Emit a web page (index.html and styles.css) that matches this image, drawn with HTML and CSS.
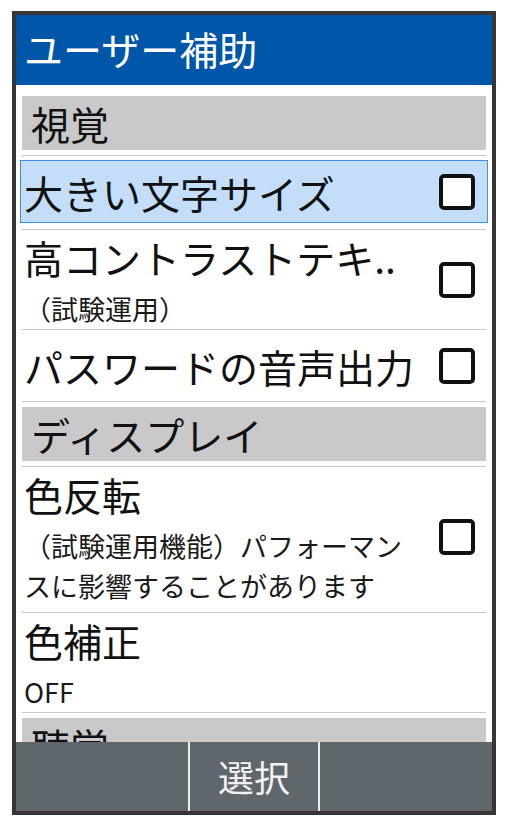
FILE: index.html
```html
<!DOCTYPE html>
<html lang="ja">
<head>
<meta charset="utf-8">
<title>ユーザー補助</title>
<link rel="stylesheet" href="styles.css">
</head>
<body>
<div class="phone">
  <header class="appbar">ユーザー補助</header>
  <main class="content">
    <div class="section"><div class="section-label">視覚</div></div>

    <div class="item item-selected">
      <div class="focus">
        <div class="text"><div class="title">大きい文字サイズ</div></div>
        <span class="checkbox"></span>
      </div>
    </div>

    <div class="item">
      <div class="text">
        <div class="title">高コントラストテキ..</div>
        <div class="sub">（試験運用）</div>
      </div>
      <span class="checkbox"></span>
    </div>

    <div class="item">
      <div class="text"><div class="title">パスワードの音声出力</div></div>
      <span class="checkbox"></span>
    </div>

    <div class="section"><div class="section-label">ディスプレイ</div></div>

    <div class="item item-long">
      <div class="text">
        <div class="title">色反転</div>
        <div class="sub">（試験運用機能）パフォーマンスに影響することがあります</div>
      </div>
      <span class="checkbox"></span>
    </div>

    <div class="item">
      <div class="text">
        <div class="title">色補正</div>
        <div class="sub">OFF</div>
      </div>
    </div>

    <div class="section"><div class="section-label">聴覚</div></div>
  </main>
  <footer class="softkeys">
    <div class="key"></div>
    <div class="key">選択</div>
    <div class="key"></div>
  </footer>
</div>
</body>
</html>
```

FILE: styles.css
```css
html, body {
  margin: 0;
  padding: 0;
  background: #ffffff;
}

body {
  font-family: "Noto Sans CJK JP", "Noto Sans", sans-serif;
  color: #111111;
}

.phone {
  box-sizing: border-box;
  width: 484px;
  height: 804px;
  margin: 11px 0 0 12px;
  border: 4px solid #363636;
  display: flex;
  flex-direction: column;
  overflow: hidden;
  background: #ffffff;
}

.appbar {
  flex: none;
  height: 70px;
  box-sizing: border-box;
  padding: 0 0 4px 8px;
  line-height: 66px;
  font-size: 39px;
  color: #ffffff;
  background: #0056a9;
  white-space: nowrap;
}

.content {
  flex: 1;
  min-height: 0;
  overflow: hidden;
  padding: 6px 6px 0;
}

.section {
  padding: 5px 0;
  border-bottom: 1px solid #c6c9c9;
}

.section-label {
  height: 54px;
  line-height: 54px;
  padding-left: 9px;
  font-size: 39px;
  background: #c9c9c9;
  color: #111111;
}

.item {
  box-sizing: border-box;
  display: flex;
  align-items: center;
  min-height: 72px;
  padding: 0 11px 0 2px;
  border-bottom: 1px solid #c6c9c9;
}

.item-selected {
  display: block;
  min-height: 0;
  padding: 4px 0 6px;
}

.focus {
  display: flex;
  align-items: center;
  box-sizing: border-box;
  height: 63px;
  margin: 0 -2px;
  padding: 0 12px 0 3px;
  background: #c4defa;
  border: 1px solid #3f8ee6;
}

.item-long {
  padding-bottom: 6px;
}

.text {
  flex: 1;
  min-width: 0;
}

.title {
  font-size: 39px;
  line-height: 54px;
  white-space: nowrap;
}

.sub {
  margin-top: 5px;
  font-size: 27px;
  line-height: 40px;
  color: #1a1a1a;
}

.checkbox {
  flex: none;
  box-sizing: border-box;
  width: 36px;
  height: 36px;
  margin-left: 24px;
  border: 4px solid #111111;
  border-radius: 5px;
  background: #ffffff;
}

.softkeys {
  flex: none;
  height: 69px;
  display: grid;
  grid-template-columns: 172px 128px 1fr;
  column-gap: 2px;
  background: #e9ecec;
}

.key {
  background: #5f676d;
  color: #f2f2f2;
  font-size: 36px;
  line-height: 69px;
  text-align: center;
}
```
